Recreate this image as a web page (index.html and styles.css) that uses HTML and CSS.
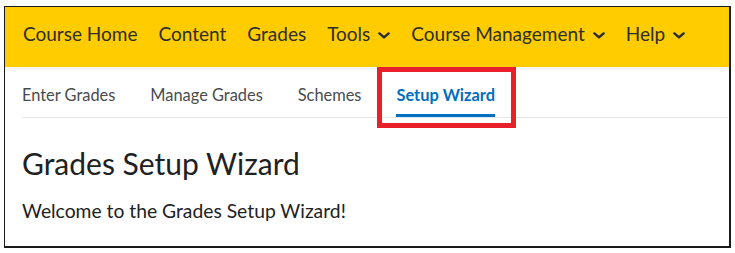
FILE: index.html
```html
<!DOCTYPE html>
<html lang="en">
<head>
<meta charset="utf-8">
<title>Grades Setup Wizard</title>
<link rel="stylesheet" href="styles.css">
</head>
<body>
<div class="frame">
  <nav class="navbar">
    <a class="nav-item">Course Home</a>
    <a class="nav-item">Content</a>
    <a class="nav-item">Grades</a>
    <a class="nav-item">Tools<svg class="chev" width="12" height="7" viewBox="0 0 12 7"><path d="M1.4 1.4 L6 5.4 L10.6 1.4" fill="none" stroke="#2b2b2b" stroke-width="2.4" stroke-linecap="round" stroke-linejoin="round"/></svg></a>
    <a class="nav-item">Course Management<svg class="chev" width="12" height="7" viewBox="0 0 12 7"><path d="M1.4 1.4 L6 5.4 L10.6 1.4" fill="none" stroke="#2b2b2b" stroke-width="2.4" stroke-linecap="round" stroke-linejoin="round"/></svg></a>
    <a class="nav-item">Help<svg class="chev" width="12" height="7" viewBox="0 0 12 7"><path d="M1.4 1.4 L6 5.4 L10.6 1.4" fill="none" stroke="#2b2b2b" stroke-width="2.4" stroke-linecap="round" stroke-linejoin="round"/></svg></a>
  </nav>
  <div class="shade"></div>
  <div class="tabs">
    <a class="tab">Enter Grades</a>
    <a class="tab">Manage Grades</a>
    <a class="tab">Schemes</a>
    <a class="tab active">Setup Wizard<span class="highlight"></span></a>
  </div>
  <main class="content">
    <h1 class="title">Grades Setup Wizard</h1>
    <p class="welcome">Welcome to the Grades Setup Wizard!</p>
  </main>
</div>
</body>
</html>
```

FILE: styles.css
```css
html, body {
  margin: 0;
  padding: 0;
  background: #ffffff;
}

body {
  font-family: Lato, "Noto Sans", sans-serif;
}

.frame {
  position: relative;
  box-sizing: border-box;
  margin: 6px 0 0 4px;
  width: 727px;
  height: 242px;
  border-style: solid;
  border-color: #1a1a1a;
  border-width: 1px 2px 2px 1px;
  background: #ffffff;
}

.navbar {
  display: flex;
  align-items: flex-start;
  gap: 21px;
  box-sizing: border-box;
  height: 60px;
  padding: 15px 0 0 18px;
  background: #ffcc00;
}

.nav-item {
  display: flex;
  align-items: center;
  font-size: 19px;
  line-height: 23px;
  color: #2e2e2e;
  white-space: nowrap;
}

.chev {
  margin-left: 8px;
  margin-top: 3px;
}

.shade {
  height: 3px;
  background: #f6f6f6;
}

.tabs {
  display: flex;
  gap: 35px;
  margin: 0 1px 0 17px;
  border-bottom: 1px solid #e3e6ea;
}

.tab {
  position: relative;
  padding: 16px 0 10px;
  font-size: 16.4px;
  line-height: 18px;
  color: #494c4e;
  border-bottom: 3px solid transparent;
  white-space: nowrap;
}

.tab.active {
  color: #006fbf;
  font-weight: 700;
  border-bottom-color: #006fbf;
}

.highlight {
  position: absolute;
  left: -19px;
  top: -3px;
  width: 139px;
  height: 61px;
  box-sizing: border-box;
  border: 5px solid #e8202a;
}

.content {
  padding: 0 0 0 17px;
}

.title {
  margin: 27px 0 0;
  font-size: 30px;
  line-height: 36px;
  font-weight: 400;
  color: #202122;
}

.welcome {
  margin: 18px 0 0;
  font-size: 19.3px;
  line-height: 23px;
  color: #202122;
}
```
